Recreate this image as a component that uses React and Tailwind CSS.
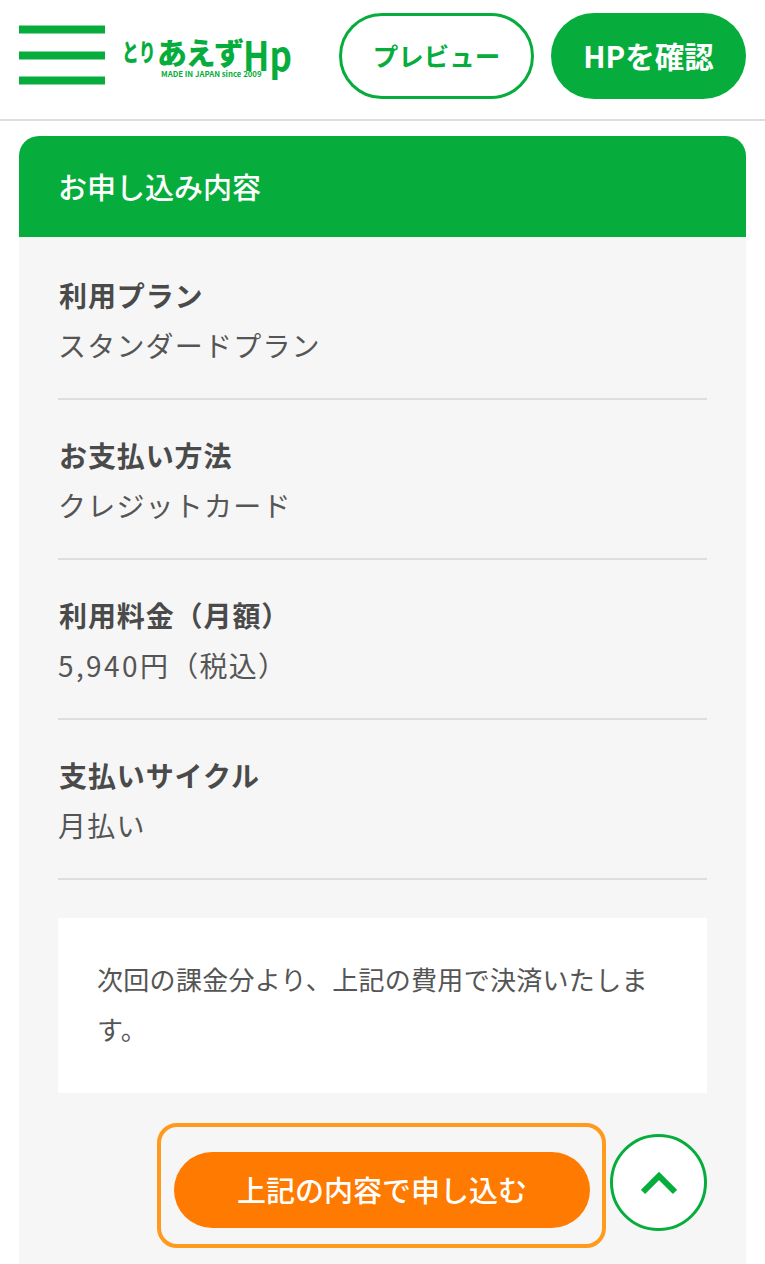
const ff = { fontFamily: '"Noto Sans CJK JP", sans-serif' };
function Row({ label, value }) {
  return (
    <div className="border-b-2 border-[#dedede] pb-[33px] mb-[35px]">
      <div className="text-[28px] leading-[40px] font-bold text-[#4a4a4a] tracking-[0.9px] ml-[1px]">{label}</div>
      <div className="text-[28px] leading-[40px] mt-[10px] text-[#555] tracking-[1.2px]">{value}</div>
    </div>
  );
}
export default function App() {
  return (
    <div className="w-[765px] h-[1264px] overflow-hidden bg-white" style={ff}>
      <header className="h-[121px] border-b-2 border-[#dddddd] flex items-center pl-[19px] pr-[19px] pb-[8px]">
        <div className="flex flex-col gap-[17.5px] w-[86px] shrink-0 -translate-y-[0.5px]">
          <div className="h-[8px] bg-[#06ad3c]" /><div className="h-[8px] bg-[#06ad3c]" /><div className="h-[8px] bg-[#06ad3c]" />
        </div>
        <div className="ml-[17px] w-[168px] shrink-0 flex flex-col items-start text-[#06ad3c]">
          <div className="h-[36px] flex items-center whitespace-nowrap font-black">
            <span className="text-[24px] leading-[30px] w-[35px] origin-left scale-x-[0.7]">とり</span>
            <span className="text-[30px] leading-[30px] tracking-[-1.5px] w-[86px]">あえず</span>
            <span className="text-[41px] leading-[30px] font-bold w-[47px] origin-left scale-x-[0.85] translate-y-[2px]">Hp</span>
          </div>
          <div className="font-bold text-[7.8px] leading-[10px] pl-[39px] whitespace-nowrap">MADE IN JAPAN since 2009</div>
        </div>
        <div className="ml-auto w-[195px] h-[86px] shrink-0 rounded-[43px] border-[3px] border-[#06ad3c] flex items-center justify-center text-[#06ad3c] font-bold text-[25.5px]">プレビュー</div>
        <div className="ml-[17px] w-[195px] h-[86px] shrink-0 rounded-[43px] bg-[#06ad3c] flex items-center justify-center text-white font-bold text-[29.5px]">HPを確認</div>
      </header>
      <main className="px-[19px] pt-[15px]">
        <div className="h-[101px] rounded-t-[20px] bg-[#06ad3c] flex items-center px-[39px] text-white font-medium text-[29px]">お申し込み内容</div>
        <div className="bg-[#f6f6f6] px-[39px] pt-[38px] h-[1100px]">
          <Row label="利用プラン" value="スタンダードプラン" />
          <Row label="お支払い方法" value="クレジットカード" />
          <Row label="利用料金（月額）" value={<><span className="tracking-[2.4px]">5,940円</span>（税込）</>} />
          <Row label="支払いサイクル" value="月払い" />
          <div className="mt-[38px] h-[175px] bg-white px-[39px] pt-[36px] text-[26px] leading-[50px] text-[#555] tracking-[0.3px]">次回の課金分より、上記の費用で決済いたします。</div>
          <div className="mt-[30px] flex items-start">
            <div className="ml-[99px] w-[449px] h-[125px] rounded-[20px] border-[4px] border-[#ff9a1f] flex justify-center pt-[25px] pl-[1px]">
              <div className="w-[416px] h-[76px] rounded-[38px] bg-[#ff7a00] text-white font-medium text-[29px] flex items-center justify-center">上記の内容で申し込む</div>
            </div>
            <div className="ml-[4px] mt-[11px] w-[97px] h-[97px] rounded-full border-[3px] border-[#06ad3c] bg-white flex items-center justify-center">
              <svg width="36" height="24" viewBox="0 0 36 24" fill="none" stroke="#06ad3c" strokeWidth="6"><path d="M2 21 L18 5 L34 21" /></svg>
            </div>
          </div>
        </div>
      </main>
    </div>
  );
}
